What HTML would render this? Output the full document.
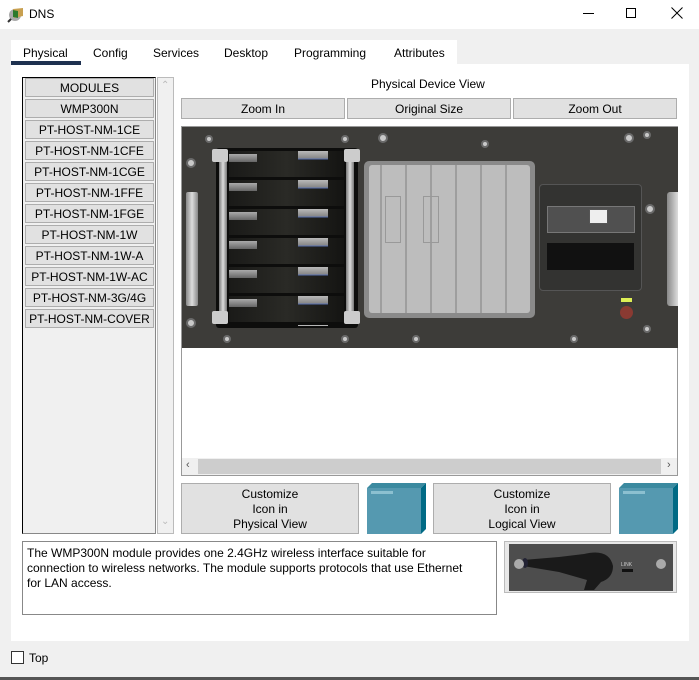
<!DOCTYPE html>
<html><head><meta charset="utf-8"><style>
*{box-sizing:border-box;margin:0;padding:0}
body{width:699px;height:680px;background:#f0f0f0;font-family:"Liberation Sans",Arial,sans-serif;font-size:12px;color:#000;position:relative;overflow:hidden}
.a{position:absolute}
.btn{position:absolute;background:#e1e1e1;border:1px solid #adadad;text-align:center;font-size:12px}
.mod{position:absolute;left:25px;width:129px;height:19px;background:#e1e1e1;border:1px solid #adadad;text-align:center;line-height:19px;font-size:12px}
.scr{position:absolute;border-radius:50%;background:#c9c9c9;border:2px solid #6a6a6a}
.bay{position:absolute;left:229px;width:115px;height:26px;background:linear-gradient(90deg,#1a1a18,#2a2a26 50%,#141412)}
.bay::before{content:"";position:absolute;left:0;top:3px;width:28px;height:8px;background:linear-gradient(180deg,#aaa,#666)}
</style></head><body>
<div class="a" style="left:0;top:0;width:699px;height:29px;background:#fff"></div>
<svg class="a" style="left:7px;top:5px" width="18" height="18"><ellipse cx="8" cy="10" rx="6" ry="6" fill="#aaa"/><path d="M6 4 L16 3 L16 11 L7 13Z" fill="#c8a050"/><path d="M6 5 L11 6 L11 13 L6 12Z" fill="#2c7a2c"/><path d="M4 14 L1 17" stroke="#333" stroke-width="2"/></svg>
<div class="a" style="left:29px;top:7px;font-size:12px">DNS</div>
<div class="a" style="left:583px;top:13px;width:11px;height:1px;background:#000"></div>
<div class="a" style="left:626px;top:8px;width:10px;height:10px;border:1px solid #000"></div>
<svg class="a" style="left:671px;top:7px" width="12" height="12"><path d="M0.5 0.5 L11.5 11.5 M11.5 0.5 L0.5 11.5" stroke="#000" stroke-width="1"/></svg>
<div class="a" style="left:11px;top:40px;width:446px;height:25px;background:#fff"></div>
<div class="a" style="left:11px;top:64px;width:678px;height:577px;background:#fff"></div>
<div class="a" style="left:23px;top:46px">Physical</div>
<div class="a" style="left:93px;top:46px">Config</div>
<div class="a" style="left:153px;top:46px">Services</div>
<div class="a" style="left:224px;top:46px">Desktop</div>
<div class="a" style="left:294px;top:46px">Programming</div>
<div class="a" style="left:394px;top:46px">Attributes</div>
<div class="a" style="left:11px;top:61px;width:70px;height:4px;background:#1e3150"></div>
<div class="a" style="left:22px;top:77px;width:134px;height:457px;border:1px solid #000;border-bottom-color:#888;border-right-color:#888;background:#f0f0f0"></div>
<div class="a" style="left:157px;top:77px;width:17px;height:457px;border:1px solid #bbb;background:#f0f0f0"></div>
<div class="a" style="left:161px;top:80px;color:#bbb;font-size:10px">&#8963;</div>
<div class="a" style="left:161px;top:516px;color:#bbb;font-size:10px">&#8964;</div>
<div class="mod" style="top:78px">MODULES</div>
<div class="mod" style="top:99px">WMP300N</div>
<div class="mod" style="top:120px">PT-HOST-NM-1CE</div>
<div class="mod" style="top:141px">PT-HOST-NM-1CFE</div>
<div class="mod" style="top:162px">PT-HOST-NM-1CGE</div>
<div class="mod" style="top:183px">PT-HOST-NM-1FFE</div>
<div class="mod" style="top:204px">PT-HOST-NM-1FGE</div>
<div class="mod" style="top:225px">PT-HOST-NM-1W</div>
<div class="mod" style="top:246px">PT-HOST-NM-1W-A</div>
<div class="mod" style="top:267px">PT-HOST-NM-1W-AC</div>
<div class="mod" style="top:288px">PT-HOST-NM-3G/4G</div>
<div class="mod" style="top:309px">PT-HOST-NM-COVER</div>
<div class="a" style="left:371px;top:77px">Physical Device View</div>
<div class="btn" style="left:181px;top:98px;width:164px;height:21px;line-height:20px">Zoom In</div>
<div class="btn" style="left:347px;top:98px;width:164px;height:21px;line-height:20px">Original Size</div>
<div class="btn" style="left:513px;top:98px;width:164px;height:21px;line-height:20px">Zoom Out</div>
<div class="a" style="left:181px;top:126px;width:497px;height:350px;border:1px solid #999;background:#fff"></div>
<div class="a" style="left:182px;top:127px;width:496px;height:221px;background:#3d3c39"></div>
<div class="a" style="left:216px;top:148px;width:142px;height:180px;background:#0d0d0c;border-radius:3px"></div>
<div class="bay" style="top:151px"></div><div class="bay" style="top:180px"></div><div class="bay" style="top:209px"></div><div class="bay" style="top:238px"></div><div class="bay" style="top:267px"></div><div class="bay" style="top:296px"></div>
<div class="a" style="left:298px;top:151px;width:30px;height:175px;background:repeating-linear-gradient(180deg,#b9b9b9 0,#888 7px,#5870b0 8px,transparent 9px,transparent 29px)"></div>
<div class="a" style="left:219px;top:162px;width:8px;height:152px;background:linear-gradient(90deg,#777,#ddd,#777)"></div>
<div class="a" style="left:346px;top:162px;width:8px;height:152px;background:linear-gradient(90deg,#777,#ddd,#777)"></div>
<div class="a" style="left:212px;top:149px;width:16px;height:13px;background:#ccc;border-radius:2px"></div>
<div class="a" style="left:344px;top:149px;width:16px;height:13px;background:#ccc;border-radius:2px"></div>
<div class="a" style="left:212px;top:311px;width:16px;height:13px;background:#ccc;border-radius:2px"></div>
<div class="a" style="left:344px;top:311px;width:16px;height:13px;background:#ccc;border-radius:2px"></div>
<div class="a" style="left:186px;top:192px;width:12px;height:114px;background:linear-gradient(90deg,#888,#ddd,#888);border-radius:2px"></div>
<div class="a" style="left:364px;top:161px;width:171px;height:157px;background:#8a8a8a;border-radius:5px"></div>
<div class="a" style="left:369px;top:165px;width:161px;height:148px;background:#bdbdbd;border-radius:3px;background-image:repeating-linear-gradient(90deg,transparent 0,transparent 11px,#808080 12px,transparent 13px,transparent 25px)"></div>
<div class="a" style="left:385px;top:196px;width:16px;height:47px;border:1px solid #999"></div>
<div class="a" style="left:423px;top:196px;width:16px;height:47px;border:1px solid #999"></div>
<div class="a" style="left:539px;top:184px;width:103px;height:107px;background:#333331;border-radius:4px;border:1px solid #555"></div>
<div class="a" style="left:547px;top:206px;width:88px;height:27px;background:#505050;border:1px solid #777"></div>
<div class="a" style="left:589px;top:209px;width:19px;height:15px;background:#eee;border:1px solid #555"></div>
<div class="a" style="left:547px;top:243px;width:87px;height:27px;background:#111"></div>
<div class="a" style="left:621px;top:298px;width:11px;height:4px;background:#ddee55"></div>
<div class="a" style="left:620px;top:306px;width:13px;height:13px;border-radius:50%;background:#8a3a32"></div>
<div class="a" style="left:667px;top:192px;width:11px;height:114px;background:linear-gradient(90deg,#888,#ddd);border-radius:3px 0 0 3px"></div>
<div class="scr" style="left:186px;top:158px;width:10px;height:10px"></div>
<div class="scr" style="left:378px;top:133px;width:10px;height:10px"></div>
<div class="scr" style="left:624px;top:133px;width:10px;height:10px"></div>
<div class="scr" style="left:186px;top:318px;width:10px;height:10px"></div>
<div class="scr" style="left:645px;top:204px;width:10px;height:10px"></div>
<div class="scr" style="left:205px;top:135px;width:8px;height:8px"></div>
<div class="scr" style="left:341px;top:135px;width:8px;height:8px"></div>
<div class="scr" style="left:481px;top:140px;width:8px;height:8px"></div>
<div class="scr" style="left:643px;top:131px;width:8px;height:8px"></div>
<div class="scr" style="left:223px;top:335px;width:8px;height:8px"></div>
<div class="scr" style="left:341px;top:335px;width:8px;height:8px"></div>
<div class="scr" style="left:412px;top:335px;width:8px;height:8px"></div>
<div class="scr" style="left:570px;top:335px;width:8px;height:8px"></div>
<div class="scr" style="left:643px;top:325px;width:8px;height:8px"></div>
<div class="a" style="left:182px;top:458px;width:495px;height:17px;background:#f0f0f0"></div>
<div class="a" style="left:198px;top:459px;width:463px;height:15px;background:#cdcdcd"></div>
<div class="a" style="left:186px;top:459px;color:#555;font-size:11px">&lsaquo;</div>
<div class="a" style="left:667px;top:459px;color:#555;font-size:11px">&rsaquo;</div>
<div class="btn" style="left:181px;top:483px;width:178px;height:51px;padding-top:3px;line-height:15px">Customize<br>Icon in<br>Physical View</div>
<div class="btn" style="left:433px;top:483px;width:178px;height:51px;padding-top:3px;line-height:15px">Customize<br>Icon in<br>Logical View</div>
<svg class="a" style="left:367px;top:483px" width="60" height="51"><path d="M0 5 L5 0 L59 0 L54 5Z" fill="#3b8aa0"/><rect x="0" y="5" width="54" height="46" fill="#5599b0"/><path d="M54 5 L59 0 L59 46 L54 51Z" fill="#006a85"/><rect x="4" y="8" width="22" height="3" fill="#8cc0d0"/></svg>
<svg class="a" style="left:619px;top:483px" width="60" height="51"><path d="M0 5 L5 0 L59 0 L54 5Z" fill="#3b8aa0"/><rect x="0" y="5" width="54" height="46" fill="#5599b0"/><path d="M54 5 L59 0 L59 46 L54 51Z" fill="#006a85"/><rect x="4" y="8" width="22" height="3" fill="#8cc0d0"/></svg>
<div class="a" style="left:22px;top:541px;width:475px;height:74px;border:1px solid #888;background:#fff"></div>
<div class="a" style="left:27px;top:546px;width:445px;line-height:15px">The WMP300N module provides one 2.4GHz wireless interface suitable for connection to wireless networks. The module supports protocols that use Ethernet for LAN access.</div>
<div class="a" style="left:504px;top:541px;width:173px;height:52px;border:1px solid #bbb;background:#e8e8e8"></div>
<div class="a" style="left:509px;top:544px;width:164px;height:47px;background:#4d4d4d"></div>
<svg class="a" style="left:509px;top:544px" width="164" height="47"><path d="M14 16 L50 13 L75 10 Q100 4 104 22 Q104 34 92 38 L85 46 L75 46 L78 36 L50 28 L14 22Z" fill="#1a1a1a"/><ellipse cx="16" cy="19" rx="3" ry="5" fill="#223"/><circle cx="10" cy="20" r="5" fill="#aaa"/><circle cx="152" cy="20" r="5" fill="#aaa"/><rect x="113" y="25" width="11" height="3" fill="#111"/><text x="112" y="22" font-size="5" fill="#ccc" font-family="Liberation Sans">LINK</text></svg>
<div class="a" style="left:11px;top:651px;width:13px;height:13px;border:1px solid #333;background:#fff"></div>
<div class="a" style="left:29px;top:651px">Top</div>
<div class="a" style="left:0;top:677px;width:699px;height:3px;background:#555"></div>
</body></html>
